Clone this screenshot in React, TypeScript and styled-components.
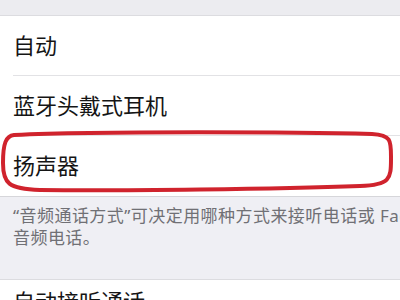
import styled, { createGlobalStyle } from "styled-components";

const GlobalStyle = createGlobalStyle`
    html, body {
        margin: 0;
        padding: 0;
        width: 400px;
        height: 300px;
        overflow: hidden;
        background: #efeff4;
        font-family: "Noto Sans", "Noto Sans CJK SC", sans-serif;
    }
`;

const Page = styled.div`
    display: flex;
    flex-direction: column;
    width: 400px;
    height: 300px;
    overflow: hidden;
`;

const TopGap = styled.div`
    flex: none;
    height: 15px;
    background: #ececf0;
`;

const Group = styled.div`
    flex: none;
    display: flex;
    flex-direction: column;
    background: #ffffff;
    border-top: 1px solid #dcdce0;
    border-bottom: 1px solid #d6d6da;
`;

const Row = styled.div<{ $last?: boolean; $height?: number }>`
    position: relative;
    display: flex;
    align-items: center;
    height: ${(props) => props.$height ?? 60}px;
    padding-left: 13px;
    font-size: 22px;
    color: #151515;
    &::after {
        content: "";
        display: ${(props) => (props.$last ? "none" : "block")};
        position: absolute;
        left: 13px;
        right: 0;
        bottom: 0;
        height: 1px;
        background: #e2e2e5;
    }
`;

const Label = styled.span`
    line-height: 1;
    margin-top: -3px;
`;

const Ring = styled.svg`
    position: absolute;
    left: 0;
    top: -8px;
    width: 400px;
    height: 66px;
    pointer-events: none;
`;

const Footer = styled.div`
    flex: none;
    padding: 8px 0 30px 13px;
    font-size: 17px;
    line-height: 22px;
    letter-spacing: 0.45px;
    color: #707075;
    white-space: nowrap;
`;

const items = ["自动", "蓝牙头戴式耳机", "扬声器"];

function App() {
    return (
        <Page>
            <GlobalStyle />
            <TopGap />
            <Group>
                {items.map((item, index) => (
                    <Row key={item} $last={index === items.length - 1}>
                        <Label>{item}</Label>
                        {index === 2 && (
                            <Ring viewBox="0 0 400 66">
                                <path
                                    d="M 14 7 C 100 3, 300 4, 372 6 C 392 7, 391 13, 391 31 C 391 51, 390 57, 360 58 C 280 61, 120 63, 40 62 C 8 61, 3 55, 3 35 C 3 15, 6 8, 14 7 Z"
                                    fill="none"
                                    stroke="#d0232d"
                                    strokeWidth="4"
                                />
                            </Ring>
                        )}
                    </Row>
                ))}
            </Group>
            <Footer>
                “音频通话方式”可决定用哪种方式来接听电话或 FaceTime
                <br />
                音频电话。
            </Footer>
            <Group>
                <Row $last $height={44}>
                    <Label>自动接听通话</Label>
                </Row>
            </Group>
        </Page>
    );
}

export default App;
